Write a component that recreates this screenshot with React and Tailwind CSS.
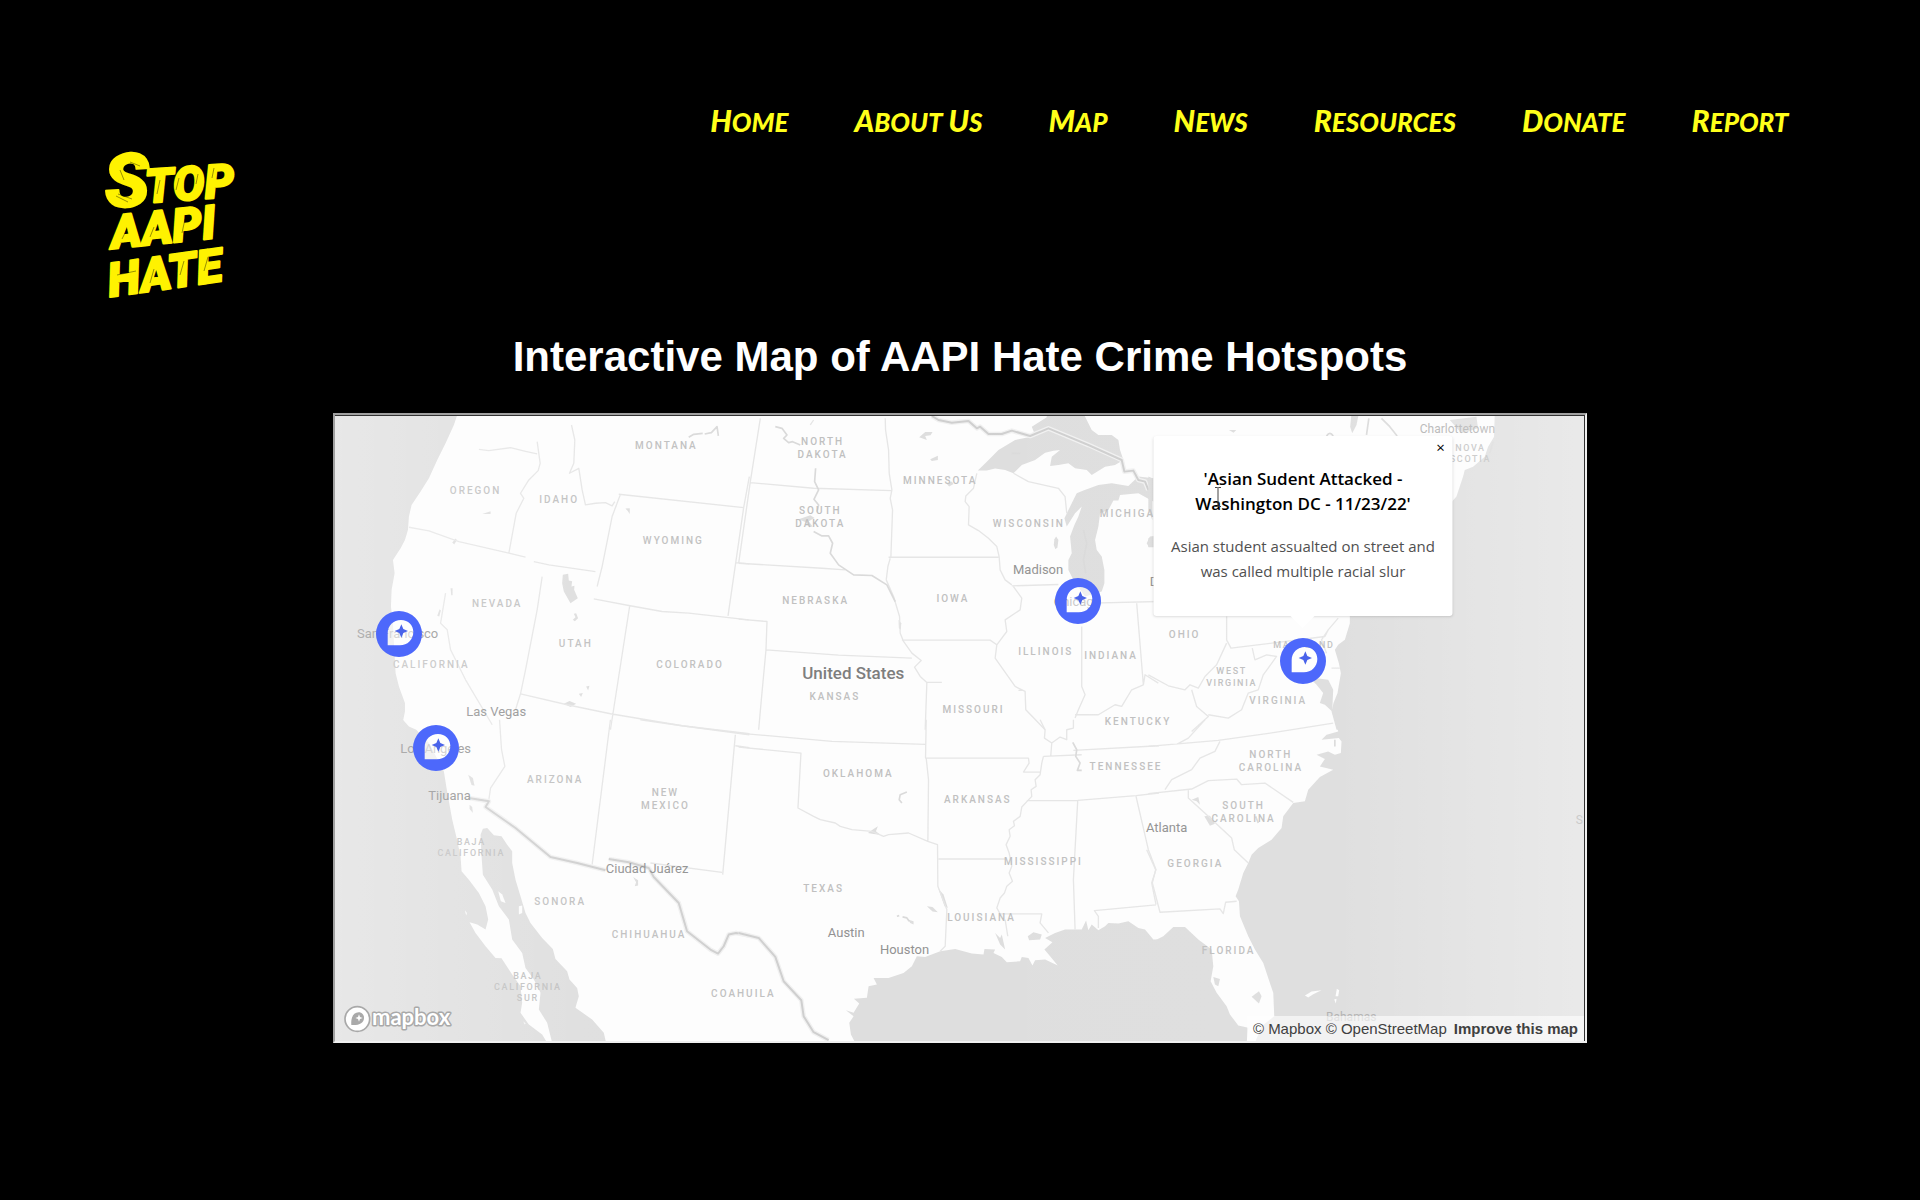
import React, { useState } from 'react';

const NAV_LINKS = ['Home', 'About Us', 'Map', 'News', 'Resources', 'Donate', 'Report'];

// Marker positions as a percentage of the map
const HOTSPOTS = [
  { id: 'san-francisco', name: 'San Francisco', left: 5.1, top: 34.9 },
  { id: 'los-angeles', name: 'Los Angeles', left: 8.12, top: 53.2 },
  { id: 'chicago', name: 'Chicago', left: 59.5, top: 29.6 },
  { id: 'washington', name: 'Washington DC', left: 77.5, top: 39.2 },
];

// Each tile keeps its own local coordinates, three units to a pixel
const TILES = [
  {
    x: 0,
    y: 0,
    water: [
      'M0 0H390L375 45L350 100L325 150L300 205L275 245L248 285L240 320L237 360L228 390L215 415L192 450L197 490L188 540L186 590L192 640L196 720L200 790L210 830L228 880L228 905L222 935H0Z',
      'M702 495L718 492L720 512L730 514L728 530L737 528L736 540L747 565L725 580L705 545L700 520Z',
      'M735 612L742 610L748 625L738 634L732 630L740 622Z',
      'M460 312L485 304L485 312Z',
      'M890 296L903 295V312L897 303Z',
      'M705 882L722 874L742 882L725 892Z',
      'M370 398L380 386L384 390L376 404Z',
      'M325 618L332 598L336 602L331 620Z',
      'M365 535H371V556H367Z',
      'M772 830L782 828L778 842Z',
      'M750 852L762 850L757 862Z',
    ],
    borders:
      'M450 118L480 122L545 113L590 124L625 132M625 95L634 160L628 182L600 210L575 250L585 265L562 310L540 430M240 352L300 363L390 395L540 430L590 442M615 455L660 465L800 485M728 45L738 90L735 160L722 190L750 175L760 240L770 285L800 280L830 278L850 288L858 275M870 253L1245 293L1198 618M875 253L850 320L820 470L805 530M795 567L900 587L1000 605L1080 610L1260 630M1262 200L1245 293M1222 458L1262 462M640 500L625 600L590 780L575 852L560 900M350 550L335 640L355 660L365 720L410 810L490 945M903 587L845 960M575 852L715 885L845 912L1060 948L1262 975',
    rivers: 'M1080 82L1095 73L1122 70M1128 72L1148 68L1165 50L1169 78',
    labels: [
      { text: 'MONTANA', x: 1010, y: 116 },
      { text: 'OREGON', x: 437, y: 252 },
      { text: 'IDAHO', x: 688, y: 279 },
      { text: 'WYOMING', x: 1031, y: 401 },
      { text: 'NEVADA', x: 502, y: 590 },
      { text: 'UTAH', x: 738, y: 713 },
      { text: 'COLORADO', x: 1081, y: 775 },
      { text: 'CALIFORNIA', x: 304, y: 776 },
    ],
    cities: [
      { text: 'San Francisco', x: 206, y: 685 },
      { text: 'Las Vegas', x: 502, y: 918 },
    ],
  },
  {
    x: 1230,
    y: 0,
    water: [
      'M718 182L745 155L780 120L830 90L870 82L890 75L880 50L925 22L925 10H1035L1060 60L1080 75L1120 75L1140 90L1145 120L1155 150L1130 165L1100 170L1060 195L1045 180L1010 175L990 160L960 165L935 168L940 140L965 120L945 122L920 128L890 150L850 165L825 190L800 180L770 176L745 182Z',
      'M1030 290L1010 310L985 350L978 325L1000 280L1015 250L1035 242L1080 225L1120 220L1170 228L1200 200L1245 205V275L1200 250L1145 255L1140 272L1125 272L1110 300L1085 310L1080 350L1070 390L1075 420L1090 440L1098 480L1098 520L1090 545L1040 560L1005 510L990 480L990 450L1000 430L995 380L1008 345L1020 320Z',
      'M948 388L953 380L960 390L957 412L951 418L946 405Z',
      'M1225 400L1235 380L1250 378V412H1232Z',
      'M542 82L560 66L582 66L576 76L560 78L565 90Z',
      'M575 148L598 137V150L580 153Z',
      'M625 222L640 215L645 222L632 230Z',
      'M180 328L215 316L228 324L210 334L222 350L212 352L200 336Z',
      'M480 630L488 640L487 660L481 655Z',
    ],
    borders:
      'M65 25L35 215L0 460M35 218L225 235L460 242M215 45L225 30M440 25L441 60L450 120L452 190L460 240L455 265L462 300L457 440M450 442H780M455 445L448 470L443 510M0 460L250 475L320 480M0 628L85 635L82 720L300 736L520 745M82 720L68 870L60 960M443 510L465 560L483 620L485 670L495 695L520 730L548 752L528 772L545 800L565 818L560 960M565 818H610M715 190L705 235L682 258L680 275L692 290L690 345L720 362L750 385L775 410L782 440L785 480L800 510L820 525M820 528L960 524M825 530L850 565L845 600L800 630L805 665L775 705M490 691H755L775 705L770 745L830 830L860 845L862 900L920 960M1030 650V830L1040 855L1020 900L1010 925M1010 915L1080 915L1130 885L1150 890L1180 840L1215 825L1195 580M1060 580L1260 575M825 190L870 215L960 235L980 260L985 310M1215 825L1220 795L1260 820M840 842H855',
    rivers:
      'M110 50L130 55L145 75L135 85L150 98L162 95L185 105M231 175L228 215L240 240L226 268L240 285L235 305M225 365L250 378L270 378L282 400L275 430L300 465L345 495L400 497L445 525L470 575M820 130H845M1035 360L1045 400L1035 450L1042 490',
    national:
      'M580 18L600 30L640 38L690 33L715 55L725 50L750 72L790 72L820 62L875 78L930 55L1050 105L1150 150L1158 185L1185 182L1200 210L1220 215L1230 240',
    labels: [
      { text: 'NORTH', x: 249, y: 104 },
      { text: 'DAKOTA', x: 249, y: 143 },
      { text: 'SOUTH', x: 242, y: 311 },
      { text: 'DAKOTA', x: 242, y: 351 },
      { text: 'MINNESOTA', x: 602, y: 221 },
      { text: 'WISCONSIN', x: 868, y: 352 },
      { text: 'MICHIGAN', x: 1178, y: 320 },
      { text: 'NEBRASKA', x: 228, y: 581 },
      { text: 'IOWA', x: 640, y: 575 },
      { text: 'KANSAS', x: 286, y: 871 },
      { text: 'MISSOURI', x: 702, y: 911 },
      { text: 'ILLINOIS', x: 919, y: 737 },
      { text: 'INDIANA', x: 1115, y: 747 },
    ],
    cities: [
      { text: 'Madison', x: 899, y: 491 },
      { text: 'Chicago', x: 1017, y: 587 },
      { text: 'Detroit', x: 1292, y: 529 },
    ],
    country: { text: 'United States', x: 344, y: 808 },
  },
  {
    x: 2460,
    y: 0,
    water: [
      'M1040 10H1330V960H565L550 905L556 880L568 850L578 790L572 760L560 720L570 705L590 690L605 640V560H900L912 275L925 260L945 200L950 180L975 170L1010 140L1020 110L1038 80Z',
      'M475 795L500 805L540 810L555 840L552 905L530 885L515 880L525 850L505 825Z',
      'M610 10H632L625 45L612 70L606 50Z',
      'M905 30L985 20L990 55L940 70Z',
      'M0 200L12 205V330L0 300Z',
      'M0 385L12 380V410L0 412Z',
      'M242 60H264L256 68Z',
    ],
    borders:
      'M235 620V690L248 715L530 680L540 660L570 625M540 660L520 690L535 730M235 700L205 765L170 800L150 835L125 825L110 840L60 828L0 795M130 840L145 890L180 920L130 965M180 915L240 925L280 900L300 850L330 840L345 795L385 740L355 735L320 750L312 715M575 775H550',
    rivers: 'M662 25L655 75M700 25L725 50L747 78M535 78Q545 62 555 78M1035 95L1025 130',
    labels: [
      { text: 'NOVA', x: 964, y: 122, small: true },
      { text: 'SCOTIA', x: 964, y: 155, small: true },
      { text: 'OHIO', x: 106, y: 686 },
      { text: 'MARYLAND', x: 464, y: 716, small: true },
      { text: 'WEST', x: 247, y: 793, small: true },
      { text: 'VIRGINIA', x: 247, y: 829, small: true },
      { text: 'VIRGINIA', x: 387, y: 882 },
      { text: 'KENTUCKY', x: -34, y: 947 },
    ],
    cities: [{ text: 'Charlottetown', x: 928, y: 69, light: true }],
  },
  {
    x: 0,
    y: 930,
    water: [
      'M0 0H222L240 20L262 30L300 70L345 155L352 200L360 245L370 300L382 350L395 410L398 455L420 480L450 520L470 560L478 600L470 630L445 615L422 608L440 640L470 680L500 715L518 716L550 765L575 800L580 850L575 880L600 915L640 945L655 970H0Z',
      'M455 345L462 327L475 325L495 347L518 350L535 375L550 395L550 430L560 480L575 530L590 580L605 610L640 655L672 688L680 718L715 755L722 780L745 805L750 830L740 865L790 900L825 940L832 970H670L655 910L630 870L635 820L615 780L590 745L580 700L550 660L540 600L510 560L490 510L462 465L458 410Z',
      'M418 165L432 175L437 198L428 196Z',
      'M422 255L430 262L432 280L422 268Z',
      'M913 472L928 482V498L918 500L922 488Z',
    ],
    islands: ['M508 515L520 525L530 550L516 545Z', 'M570 560L580 558L580 580L570 585Z', 'M408 572L414 580L412 588Z', 'M583 905L590 912L588 915Z'],
    borders:
      'M845 0L790 435M512 0L518 90L528 140L485 205L480 240M935 0L1060 18L1262 42M1220 45L1182 465M1220 78L1262 84M965 430L1180 458',
    national:
      'M420 235L480 245L470 262L560 325L665 412L745 430L830 452M840 418L900 428L960 445L975 472L1050 550L1075 635L1145 690L1168 702L1185 680L1200 645L1222 640L1262 648',
    labels: [
      { text: 'ARIZONA', x: 676, y: 191 },
      { text: 'NEW', x: 1007, y: 228 },
      { text: 'MEXICO', x: 1007, y: 268 },
      { text: 'BAJA', x: 424, y: 377, small: true },
      { text: 'CALIFORNIA', x: 424, y: 410, small: true },
      { text: 'SONORA', x: 691, y: 557 },
      { text: 'CHIHUAHUA', x: 958, y: 656 },
      { text: 'BAJA', x: 594, y: 777, small: true },
      { text: 'CALIFORNIA', x: 594, y: 810, small: true },
      { text: 'SUR', x: 594, y: 843, small: true },
    ],
    cities: [
      { text: 'Los Angeles', x: 320, y: 101 },
      { text: 'Tijuana', x: 362, y: 240 },
      { text: 'Ciudad Juárez', x: 955, y: 461 },
    ],
  },
  {
    x: 1230,
    y: 930,
    water: [
      'M1262 660L1245 660L1220 630L1200 625L1170 605L1140 612L1110 610L1100 620L1080 632L1060 615L1050 632L1043 603L1030 630L980 630L950 640L920 655L942 668L918 690L935 710L958 738L920 720L890 722L882 738L870 715L850 712L845 725L805 728L790 712L765 700L770 690L738 688L735 705L700 702L650 688L605 695L560 712L535 710L520 740L495 760L450 775L405 775L415 795L390 800L385 835L346 838L362 852L345 880L322 872L345 890L332 910L337 945L350 970H1262Z',
      'M868 650L885 638L910 645L905 660L872 662Z',
      'M600 508L615 525L628 565L618 560Z',
      'M565 560L582 562L598 578L582 576Z',
      'M770 640L785 655L790 645L800 690L785 675Z',
      'M388 340L405 328L418 320L412 335L425 345L405 343Z',
      'M508 600L525 605V615L515 610Z',
    ],
    borders:
      'M0 40L280 65L560 74M563 0L561 115H870L872 130L855 157H905M563 115L570 180L568 365L597 375L598 500L625 570L620 680L605 695M0 82L187 100L178 265L225 290L245 300L290 310L305 320L340 330L400 335L435 350L450 345L510 340L568 365M600 418H800M915 110L910 130L905 165L890 180L893 200L878 210L880 230L850 262L845 290L825 305L828 318L812 330L815 350L803 375L812 400L820 440L812 460L822 485L805 500L798 520L785 535L775 565L785 583L910 583L905 610L930 640M865 243L1018 242L1193 228L1262 220M1018 242L1005 480L1010 630M905 0L920 30L918 55L940 70L937 108M915 110L1030 105M1005 92L1262 78M940 70L965 52L985 60L985 30L1005 25V0M1193 230L1230 390L1253 450L1240 490L1253 555M1253 556L1068 573L1080 590V625M800 600L808 650',
    rivers: 'M490 250L482 240L485 225L505 217M1003 68L1015 90L1012 110L1025 130L1017 152H1030M475 590L482 588M492 592L505 595L512 605',
    national: 'M0 640L60 655L110 712L135 785L188 842L195 890L225 938L270 962',
    labels: [
      { text: 'OKLAHOMA', x: 356, y: 172 },
      { text: 'ARKANSAS', x: 715, y: 250 },
      { text: 'TENNESSEE', x: 1160, y: 152 },
      { text: 'TEXAS', x: 252, y: 516 },
      { text: 'MISSISSIPPI', x: 912, y: 437 },
      { text: 'LOUISIANA', x: 726, y: 603 },
      { text: 'COAHUILA', x: 11, y: 831 },
    ],
    cities: [
      { text: 'Austin', x: 323, y: 653 },
      { text: 'Houston', x: 498, y: 703 },
      { text: 'Atlanta', x: 1285, y: 336 },
    ],
  },
  {
    x: 2460,
    y: 930,
    water: [
      'M560 0L570 35L535 45L520 60L572 55L580 65L578 100L560 105L540 95L505 105L530 118L515 140L555 150L515 172L480 210L470 245L435 250L405 290L400 325L370 360L330 385L310 405L300 430L285 460L270 510L262 530L272 545L275 590L300 650L320 690L345 730L375 820L378 890L340 920L320 970H1330V0Z',
      'M0 650L15 665L45 650L75 622L110 622L150 660L190 690L195 740L187 785L205 820L235 860L245 885L270 918L300 925L295 970H0Z',
      'M310 832L332 815L340 830L332 852Z',
      'M195 772L215 778L210 800L200 795Z',
      'M130 240L150 232L155 255L145 245Z',
      'M168 290L185 288L200 312L185 318Z',
    ],
    islands: ['M470 828L490 816L520 812L495 824L480 834Z', 'M562 830L566 808L573 812L570 830Z', 'M558 840L565 838L563 852Z'],
    borders:
      'M0 80L210 62L380 38L555 10M85 74L120 55L170 0M215 65L200 95L155 115L130 150L70 180L50 210M0 222L130 208L180 183L265 178L280 195L350 190L435 248M120 210L120 235L180 290L250 355L258 390L300 430M-5 390L22 450L12 490L35 578L215 568L225 582L232 548L265 545',
    rivers: 'M560 60V80M322 290L330 310',
    labels: [
      { text: 'NORTH', x: 365, y: 115 },
      { text: 'CAROLINA', x: 365, y: 155 },
      { text: 'SOUTH', x: 283, y: 267 },
      { text: 'CAROLINA', x: 283, y: 307 },
      { text: 'GEORGIA', x: 138, y: 442 },
      { text: 'FLORIDA', x: 238, y: 704 },
    ],
    cities: [
      { text: 'Bahamas', x: 609, y: 903, light: true },
      { text: 'S', x: 1294, y: 312, light: true },
    ],
  },
];

function labelClass(label) {
  return label.small
    ? "font-['Roboto'] text-[27px] font-medium tracking-[5px]"
    : "font-['Roboto'] text-[30px] font-medium tracking-[6px]";
}

function BaseMap() {
  return (
    <svg viewBox="18 18 3750 1875" className="block w-full h-auto" role="img" aria-label="Map of the United States">
      <defs>
        <linearGradient id="edge-fade" x1="0" y1="0" x2="1" y2="0">
          <stop offset="0" stopColor="#fff" stopOpacity="0.3" />
          <stop offset="0.2" stopColor="#fff" stopOpacity="0.06" />
          <stop offset="0.4" stopColor="#fff" stopOpacity="0" />
          <stop offset="0.8" stopColor="#fff" stopOpacity="0.04" />
          <stop offset="1" stopColor="#fff" stopOpacity="0.36" />
        </linearGradient>
      </defs>
      <rect x="0" y="0" width="3800" height="1920" fill="#fdfdfd" />

      {TILES.map((tile) => (
        <g key={`land-${tile.x}-${tile.y}`} transform={`translate(${tile.x} ${tile.y})`} fill="none" strokeLinejoin="round">
          {tile.water.map((d) => (
            <path key={d} d={d} fill="#dedede" />
          ))}
          {tile.islands && tile.islands.map((d) => <path key={d} d={d} fill="#fdfdfd" />)}
          <path d={tile.borders} stroke="#e6e6e6" strokeWidth="4" />
          {tile.rivers && <path d={tile.rivers} stroke="#dadada" strokeWidth="5" />}
          {tile.national && (
            <>
              <path d={tile.national} stroke="#f1f1f1" strokeWidth="14" />
              <path d={tile.national} stroke="#cfcfcf" strokeWidth="6" />
            </>
          )}
        </g>
      ))}

      {TILES.map((tile) => (
        <g key={`text-${tile.x}-${tile.y}`} transform={`translate(${tile.x} ${tile.y})`} textAnchor="middle">
          {tile.labels.map((label) => (
            <text key={`${label.text}-${label.y}`} x={label.x + 3} y={label.y} fill="#c0c0c0" className={labelClass(label)}>
              {label.text}
            </text>
          ))}
          {tile.cities.map((city) => (
            <text
              key={city.text}
              x={city.x}
              y={city.y}
              fill={city.light ? '#b0b0b0' : '#929292'}
              className={city.light ? "font-['Roboto'] text-[36px]" : "font-['Roboto'] text-[39px]"}
            >
              {city.text}
            </text>
          ))}
          {tile.country && (
            <text x={tile.country.x} y={tile.country.y} fill="#7e7e7e" className="font-['Roboto'] text-[51px] font-medium">
              {tile.country.text}
            </text>
          )}
        </g>
      ))}

      <rect x="0" y="0" width="3800" height="1920" fill="url(#edge-fade)" />
    </svg>
  );
}

function MarkerIcon() {
  return (
    <svg viewBox="0 0 138 138" className="block w-full h-full" aria-hidden="true">
      <path d="M35 103V67C35 44 52 27 75 27C97 27 112 43 112 63C112 86 94 103 72 103Z" fill="#fff" fillOpacity="0.5" />
      <path
        fill="#4d68fb"
        fillRule="evenodd"
        d="M69 0A69 69 0 1 1 69 138A69 69 0 1 1 69 0ZM35 103V67C35 44 52 27 75 27C97 27 112 43 112 63C112 86 94 103 72 103Z"
      />
      <path fill="#4a63ea" d="M76 40L82 54L96 60L82 66L76 80L70 66L56 60L70 54Z" />
    </svg>
  );
}

function Popup({ onClose }) {
  return (
    <div className="absolute left-[77.5%] top-[3.2%] w-[299px] -translate-x-1/2 rounded-[3px] bg-white px-4 pt-[30px] pb-8 text-center shadow-sm font-['Open_Sans',sans-serif]">
      <button
        type="button"
        onClick={onClose}
        aria-label="Close popup"
        className="absolute right-0 top-0 h-[22px] w-6 text-[15px] leading-[22px] text-black"
      >
        ×
      </button>
      <h3 className="text-[17px] leading-[25px] font-semibold text-black">
        'Asian Sudent Attacked -<br />
        Washington DC - 11/23/22'
      </h3>
      <p className="mt-[18px] text-[15px] leading-[25px] text-[#505050] whitespace-nowrap">
        Asian student assualted on street and
        <br />
        was called multiple racial slur
      </p>
      <span className="absolute left-1/2 top-full -translate-x-1/2 border-x-[12px] border-t-[12px] border-x-transparent border-t-white"></span>
    </div>
  );
}

function MapboxLogo() {
  return (
    <a href="#mapbox" aria-label="Mapbox logo" className="absolute bottom-[8px] left-[9px]">
      <svg width="112" height="28" viewBox="0 0 336 84" className="overflow-visible">
        <circle cx="40" cy="42" r="37" fill="#fff" stroke="#a9a9a9" strokeWidth="5" />
        <path d="M22 60C20 38 28 22 44 22C54 22 60 30 60 38C60 54 44 62 22 60Z" fill="#a9a9a9" />
        <path d="M45 28L48 36L56 39L48 42L45 50L42 42L34 39L42 36Z" fill="#fff" />
        <text
          x="84"
          y="60"
          className="font-['Lato'] text-[66px] font-bold"
          fill="#fff"
          stroke="#a9a9a9"
          strokeWidth="9"
          strokeLinejoin="round"
          paintOrder="stroke"
        >
          mapbox
        </text>
      </svg>
    </a>
  );
}

function HotspotMap() {
  const [open, setOpen] = useState(true);

  return (
    <div className="w-full max-w-[1254px] mx-auto border-2 border-t-[#a0a0a0] border-l-[#a0a0a0] border-r-[#f0f0f0] border-b-[#f0f0f0]">
      <div className="relative overflow-hidden border-t border-r border-[#333]">
        <BaseMap />
        {HOTSPOTS.map((spot) => (
          <button
            key={spot.id}
            type="button"
            aria-label={spot.name}
            onClick={() => setOpen(true)}
            className="absolute h-[46px] w-[46px] -translate-x-1/2 -translate-y-1/2 rounded-full cursor-pointer"
            style={{ left: `${spot.left}%`, top: `${spot.top}%` }}
          >
            <MarkerIcon />
          </button>
        ))}
        {open && <Popup onClose={() => setOpen(false)} />}
        {/* text cursor */}
        <svg className="absolute left-[70.4%] top-[11.2%]" width="8" height="22" viewBox="0 0 16 44" fill="none" stroke="#444" strokeWidth="2" aria-hidden="true">
          <path d="M2 3H7L8 4L9 3H14M8 4V40M2 41H7L8 40L9 41H14" />
        </svg>
        <MapboxLogo />
        <div className="absolute bottom-0 right-0 flex gap-[7px] bg-white/60 px-[6px] text-[15px] leading-[25px] text-[#404040] font-['Liberation_Sans',sans-serif]">
          <span>
            <a href="#mapbox">© Mapbox</a> <a href="#osm">© OpenStreetMap</a>
          </span>
          <a href="#improve" className="font-bold">
            Improve this map
          </a>
        </div>
      </div>
    </div>
  );
}

function Logo() {
  return (
    <a href="#home" className="block" aria-label="Stop AAPI Hate">
      <svg
        width="128"
        height="150"
        viewBox="0 0 128 150"
        fill="#fff200"
        stroke="#fff200"
        strokeWidth="2"
        strokeLinejoin="round"
        className="overflow-visible font-['Roboto',sans-serif] font-black italic"
      >
        <text x="-2" y="58" transform="rotate(-4 -2 58)" className="text-[74px]">S</text>
        <text x="38" y="53" transform="rotate(-4 38 53)" className="text-[47px]">TOP</text>
        <text x="4" y="99" transform="rotate(-6 4 99)" className="text-[47px]">AAPI</text>
        <text x="2" y="147" transform="rotate(-8 2 147)" className="text-[47px]">HATE</text>
        {/* dry brush streaks */}
        <g stroke="#000" strokeWidth="1" strokeOpacity="0.4" fill="none">
          <path d="M8 46L20 52M10 44L24 49M22 12L32 16M12 20L16 30M52 30L49 44M71 28L68 40M90 24L88 34M106 18L104 28" />
          <path d="M19 79L14 89M46 77L42 87M77 69L74 83M9 125L28 121M46 119L42 133M76 111L72 125M100 107L96 121" />
        </g>
      </svg>
    </a>
  );
}

export default function App() {
  return (
    <div className="min-h-screen bg-black">
      <header className="px-[5.6%] pt-[100px]">
        <nav className="flex justify-end gap-[66px] pr-6">
          {NAV_LINKS.map((link) => (
            <a
              key={link}
              href="#nav"
              className="font-['Lato',sans-serif] text-[26px] leading-[40px] font-black italic uppercase text-[#ffff1a]"
            >
              {link.split(' ').map((word, i) => (
                <React.Fragment key={word}>
                  {i > 0 && ' '}
                  <span className="inline-block first-letter:text-[30px]">{word}</span>
                </React.Fragment>
              ))}
            </a>
          ))}
        </nav>
        <div className="mt-2 flex">
          <Logo />
        </div>
      </header>

      <main className="px-6 pb-[100px]">
        <h1 className="mt-8 mb-[31px] text-center text-[42px] leading-[50px] font-bold text-white font-['Liberation_Sans',sans-serif]">
          Interactive Map of AAPI Hate Crime Hotspots
        </h1>
        <HotspotMap />
      </main>
    </div>
  );
}
